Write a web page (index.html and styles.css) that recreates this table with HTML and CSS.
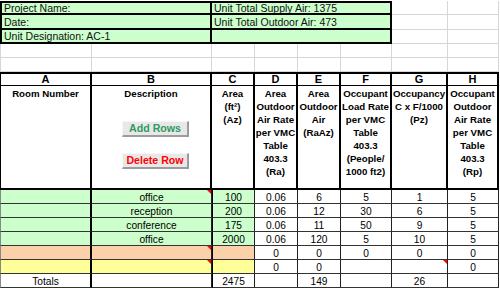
FILE: index.html
```html
<!DOCTYPE html>
<html>
<head>
<meta charset="utf-8">
<link rel="stylesheet" href="styles.css">
</head>
<body>
<div class="sheet">
  <div class="info first top">Project Name:</div>
  <div class="info mid top">Unit Total Supply Air: 1375</div>
  <div class="blank"></div><div class="blank"></div>

  <div class="info first">Date:</div>
  <div class="info mid">Unit Total Outdoor Air: 473</div>
  <div class="blank"></div><div class="blank"></div>

  <div class="info first">Unit Designation: AC-1</div>
  <div class="info mid"></div>
  <div class="blank"></div><div class="blank"></div>

  <div class="blank lead"></div><div class="blank"></div><div class="blank"></div><div class="blank"></div><div class="blank"></div><div class="blank"></div><div class="blank"></div><div class="blank"></div>
  <div class="blank lead"></div><div class="blank"></div><div class="blank"></div><div class="blank"></div><div class="blank"></div><div class="blank"></div><div class="blank"></div><div class="blank"></div>

  <div class="let lead">A</div><div class="let">B</div><div class="let">C</div><div class="let">D</div><div class="let">E</div><div class="let">F</div><div class="let">G</div><div class="let">H</div>

  <div class="hd lead">Room Number</div>
  <div class="hd desc">
    <span>Description</span>
    <span class="btn add">Add Rows</span>
    <span class="btn del">Delete Row</span>
  </div>
  <div class="hd">Area<br>(ft²)<br>(Az)</div>
  <div class="hd">Area<br>Outdoor<br>Air Rate<br>per VMC<br>Table<br>403.3<br>(Ra)</div>
  <div class="hd">Area<br>Outdoor<br>Air<br>(RaAz)</div>
  <div class="hd">Occupant<br>Load Rate<br>per VMC<br>Table<br>403.3<br>(People/<br>1000 ft2)</div>
  <div class="hd">Occupancy<br>C x F/1000<br>(Pz)</div>
  <div class="hd">Occupant<br>Outdoor<br>Air Rate<br>per VMC<br>Table<br>403.3<br>(Rp)</div>

  <div class="d lead green"></div><div class="d green note">office</div><div class="d green cc">100</div><div class="d">0.06</div><div class="d">6</div><div class="d">5</div><div class="d">1</div><div class="d">5</div>
  <div class="d lead green"></div><div class="d green">reception</div><div class="d green cc">200</div><div class="d">0.06</div><div class="d">12</div><div class="d">30</div><div class="d">6</div><div class="d">5</div>
  <div class="d lead green"></div><div class="d green">conference</div><div class="d green cc">175</div><div class="d">0.06</div><div class="d">11</div><div class="d">50</div><div class="d">9</div><div class="d">5</div>
  <div class="d lead green"></div><div class="d green">office</div><div class="d green cc">2000</div><div class="d">0.06</div><div class="d">120</div><div class="d">5</div><div class="d">10</div><div class="d">5</div>
  <div class="d lead orange"></div><div class="d orange note"></div><div class="d orange cc"></div><div class="d">0</div><div class="d">0</div><div class="d">0</div><div class="d">0</div><div class="d">0</div>
  <div class="d lead yellow"></div><div class="d yellow note"></div><div class="d yellow cc"></div><div class="d">0</div><div class="d">0</div><div class="d"></div><div class="d note"></div><div class="d">0</div>
  <div class="d lead">Totals</div><div class="d"></div><div class="d cc">2475</div><div class="d"></div><div class="d">149</div><div class="d"></div><div class="d">26</div><div class="d"></div>
</div>
</body>
</html>
```

FILE: styles.css
```css
html, body {
  margin: 0;
  padding: 0;
  background: #fff;
}

.sheet {
  display: grid;
  grid-template-columns: 92px 120px 43px 43px 43px 51px 56px 51px;
  grid-template-rows: 14px 15px 14px 14px 14px 14px 104px repeat(7, 14px);
  margin-top: 1px;
  width: 499px;
  font-family: "Liberation Sans", Arial, sans-serif;
  color: #000;
}

.sheet > div {
  box-sizing: border-box;
  overflow: hidden;
  white-space: nowrap;
}

.info {
  background: #ccffcc;
  border-right: 2px solid #000;
  border-bottom: 2px solid #000;
  font-size: 10.5px;
  line-height: 12px;
  padding-left: 2px;
  display: flex;
  align-items: center;
  color: #111;
}

.info.first {
  grid-column: span 2;
  border-left: 2px solid #000;
}

.info.mid {
  grid-column: span 4;
}

.info.top {
  border-top: 2px solid #000;
}

.blank {
  border-right: 1px solid #d6d6d6;
  border-bottom: 1px solid #d6d6d6;
}

.blank.lead {
  border-left: 1px solid #d6d6d6;
}

.let {
  border-top: 2px solid #000;
  border-right: 2px solid #000;
  border-bottom: 1px solid #000;
  font-weight: bold;
  font-size: 11px;
  line-height: 11px;
  text-align: center;
}

.let.lead {
  border-left: 1px solid #000;
}

.hd {
  border-right: 2px solid #000;
  border-bottom: 2px solid #000;
  font-weight: bold;
  font-size: 9.7px;
  line-height: 13px;
  text-align: center;
  padding-top: 1px;
}

.hd.lead {
  border-left: 1px solid #000;
}

.desc {
  display: flex;
  flex-direction: column;
  align-items: center;
}

.btn {
  align-self: flex-start;
  margin-left: 30px;
  width: 67px;
  box-sizing: border-box;
  text-align: center;
  font-size: 10.6px;
  font-weight: bold;
  line-height: 13px;
  background: #e8e8e8;
  border-top: 1px solid #f6f6f6;
  border-left: 1px solid #f6f6f6;
  border-right: 2px solid #9c9c9c;
  border-bottom: 2px solid #9c9c9c;
}

.btn.add {
  margin-top: 21px;
  color: #2f9a62;
}

.btn.del {
  margin-top: 16px;
  color: #ff0000;
}

.d {
  position: relative;
  border-right: 1px solid #222;
  border-bottom: 1px solid #333;
  font-size: 10.2px;
  line-height: 13px;
  padding-top: 1px;
  text-align: center;
}

.d.lead {
  border-left: 1px solid #888;
  border-right: 2px solid #000;
}

.d.cc {
  border-left: 1px solid #000;
}

.green {
  background: #ccffcc;
}

.orange {
  background: #fcd0a8;
}

.yellow {
  background: #ffff99;
}

.note::after {
  content: "";
  position: absolute;
  top: 0;
  right: 0;
  width: 0;
  height: 0;
  border-top: 4px solid #ff0000;
  border-left: 4px solid transparent;
}
```
